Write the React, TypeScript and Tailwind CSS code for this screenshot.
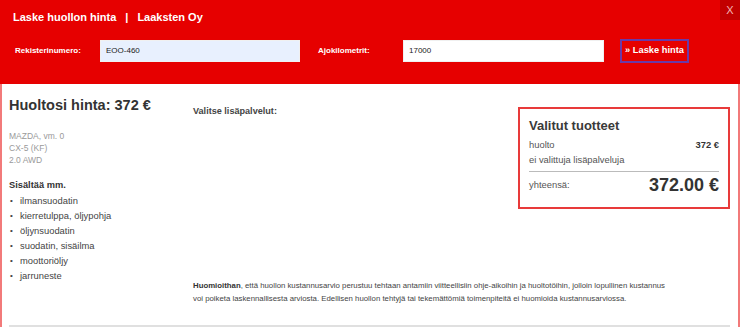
import React from "react";

const items = [
  "ilmansuodatin",
  "kierretulppa, öljypohja",
  "öljynsuodatin",
  "suodatin, sisäilma",
  "moottoriöljy",
  "jarruneste",
];

export default function App() {
  return (
    <div className="w-[740px] h-[327px] overflow-hidden bg-white text-[#333] font-['Liberation_Sans',Arial,sans-serif]">
      {/* Header */}
      <div className="relative h-[84px] bg-[#e60000] text-white">
        <div className="flex items-center pl-[13px] pt-[2px] h-[33px] text-[11px] font-bold">
          <span>Laske huollon hinta</span>
          <span className="mx-[9px]">|</span>
          <span>Laaksten Oy</span>
        </div>
        <button className="absolute top-0 right-0 w-[20px] h-[20px] bg-[#c20000] text-[#f4b4b4] text-[11px] flex items-center justify-center">
          X
        </button>
        <div className="flex items-center mt-[6px] h-[24px]">
          <label className="w-[100px] pl-[15px] text-[8px] font-bold">Rekisterinumero:</label>
          <div className="w-[200px] h-[22px] bg-[#e8f0fe] border border-[#f0f0f0] flex items-center px-[5px] text-[8px] text-[#222]">
            EOO-460
          </div>
          <label className="w-[85px] ml-[18px] text-[8px] font-bold">Ajokilometrit:</label>
          <div className="w-[201px] h-[22px] bg-white border border-[#f0f0f0] flex items-center px-[5px] text-[8px] text-[#222]">
            17000
          </div>
          <button className="ml-[16px] w-[69px] h-[24px] border-2 border-[#6a3aa8] text-[9.3px] font-bold flex items-center justify-center">
            » Laske hinta
          </button>
        </div>
      </div>

      {/* Body */}
      <div className="h-[243px] border-l-2 border-r-2 border-[#f27a7a] pt-[12px] pl-[7px] pr-[8px] flex flex-col">
        <div className="flex flex-1">
          <div className="w-[184px]">
            <h1 className="text-[14.5px] leading-[18px] font-bold">Huoltosi hinta: 372 €</h1>
            <div className="mt-[16px] text-[8.5px] leading-[12px] text-[#9a9a9a]">
              <div>MAZDA, vm. 0</div>
              <div>CX-5 (KF)</div>
              <div>2.0 AWD</div>
            </div>
            <div className="mt-[13px] text-[9.3px] leading-[12px] font-bold">Sisältää mm.</div>
            <ul className="mt-[2px] text-[9.4px] leading-[15px] text-[#444]">
              {items.map((it) => (
                <li key={it} className="flex items-center">
                  <span className="w-[11px] pl-[1px] text-[8px]">•</span>
                  <span>{it}</span>
                </li>
              ))}
            </ul>
          </div>
          <div className="flex-1 flex flex-col">
            <div className="flex justify-between">
              <div className="pt-[9px] text-[9.1px] leading-[12px] font-bold text-[#444]">Valitse lisäpalvelut:</div>
              <div className="mt-[11px] w-[212px] h-[102px] border-2 border-[#e83a3a] px-[9px] pt-[9px]">
                <div className="text-[13px] leading-[16px] font-bold text-[#3a3a3a]">Valitut tuotteet</div>
                <div className="mt-[3px] flex justify-between text-[9.4px] leading-[15px] text-[#555]">
                  <span>huolto</span>
                  <span className="font-bold text-[#333]">372 €</span>
                </div>
                <div className="text-[9.4px] leading-[15px] text-[#555]">ei valittuja lisäpalveluja</div>
                <div className="mt-[4px] border-t border-[#bbb] flex justify-between items-center h-[27px]">
                  <span className="text-[9.4px] text-[#555]">yhteensä:</span>
                  <span className="text-[18px] font-bold text-[#333]">372.00 €</span>
                </div>
              </div>
            </div>
            <p className="mt-auto mb-[20px] max-w-[478px] text-[7.8px] leading-[13px] text-[#444]">
              <b className="text-[#333]">Huomioithan</b>, että huollon kustannusarvio perustuu tehtaan antamiin viitteellisiin ohje-aikoihin ja huoltotöihin, jolloin lopullinen kustannus voi poiketa laskennallisesta arviosta. Edellisen huollon tehtyjä tai tekemättömiä toimenpiteitä ei huomioida kustannusarviossa.
            </p>
          </div>
        </div>
        <div className="border-t-2 border-[#e0e0e0]" />
      </div>
    </div>
  );
}
